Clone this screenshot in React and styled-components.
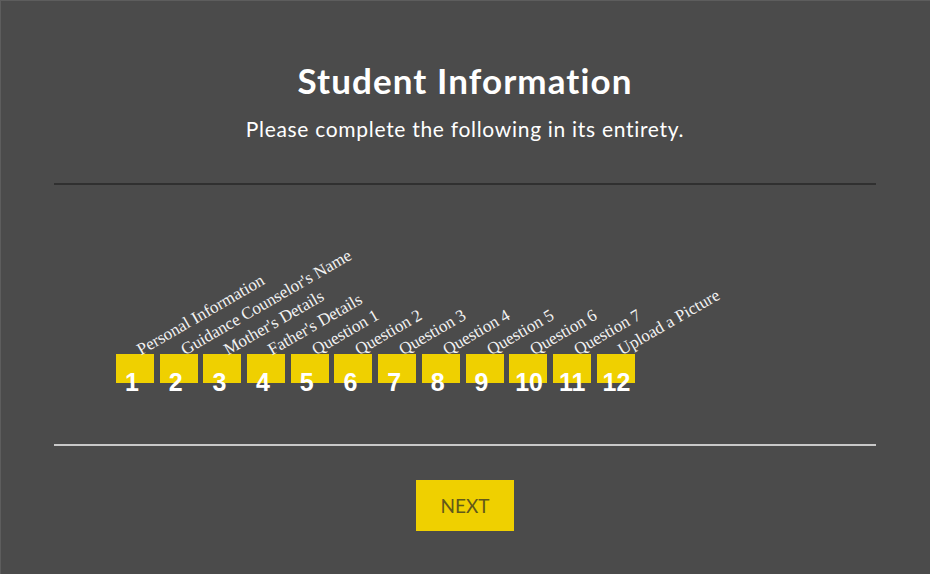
import styled, { createGlobalStyle } from 'styled-components';

const GlobalStyle = createGlobalStyle`
  html, body {
    margin: 0;
    padding: 0;
    background: #4b4b4b;
  }
  body {
    font-family: Lato, "Open Sans", sans-serif;
  }
`;

const steps = [
  'Personal Information',
  "Guidance Counselor's Name",
  "Mother's Details",
  "Father's Details",
  'Question 1',
  'Question 2',
  'Question 3',
  'Question 4',
  'Question 5',
  'Question 6',
  'Question 7',
  'Upload a Picture',
];

const Page = styled.div`
  box-sizing: border-box;
  min-height: 574px;
  padding: 0 54px;
  background: #4b4b4b;
  box-shadow: inset 1px 1px 0 #5d5d5d;
  color: #fff;
`;

const Header = styled.header`
  text-align: center;
  padding-top: 60px;
`;

const Title = styled.h1`
  margin: 0;
  font-size: 35px;
  line-height: 40px;
  font-weight: 700;
  letter-spacing: 1.1px;
`;

const Subtitle = styled.p`
  margin: 16px 0 0;
  font-size: 21px;
  line-height: 26px;
  font-weight: 400;
  letter-spacing: 0.7px;
`;

const Rule = styled.div`
  height: 2px;
  margin-top: ${(p) => p.$top || 0}px;
  background: ${(p) => (p.$light ? '#c9c9c9' : '#303030')};
`;

const StepsArea = styled.div`
  height: 259px;
  display: flex;
  align-items: flex-end;
  padding: 0 0 61px 62px;
  box-sizing: border-box;
`;

const StepList = styled.ol`
  list-style: none;
  margin: 0;
  padding: 0;
  display: flex;
  gap: 5.7px;
`;

const Step = styled.li`
  position: relative;
  width: 38px;
  height: 29px;
  background: #efd000;
  display: flex;
  align-items: flex-end;
  padding-left: ${(p) => (p.$wide ? 6 : 9)}px;
  box-sizing: border-box;
`;

const StepNumber = styled.span`
  font-family: "Liberation Sans", Arial, sans-serif;
  font-weight: 700;
  font-size: 25px;
  line-height: 25px;
  color: #fff;
  margin-bottom: -12px;
`;

const StepLabel = styled.span`
  position: absolute;
  left: 27px;
  bottom: calc(100% - 5px);
  transform-origin: 0 100%;
  transform: rotate(-30deg);
  white-space: nowrap;
  font-family: "Liberation Serif", "Times New Roman", serif;
  font-size: 17px;
  line-height: 19px;
  color: #f2f2f2;
`;

const Footer = styled.div`
  display: flex;
  justify-content: center;
  padding-top: 34px;
`;

const NextButton = styled.button`
  width: 98px;
  height: 51px;
  border: none;
  background: #efd000;
  color: #62591a;
  font-family: Lato, "Open Sans", sans-serif;
  font-size: 19px;
  cursor: pointer;
`;

export default function App() {
  return (
    <>
      <GlobalStyle />
      <Page>
        <Header>
          <Title>Student Information</Title>
          <Subtitle>Please complete the following in its entirety.</Subtitle>
        </Header>
        <Rule $top={41} />
        <StepsArea>
          <StepList>
            {steps.map((label, i) => (
              <Step key={label} $wide={i >= 9}>
                <StepLabel>{label}</StepLabel>
                <StepNumber>{i + 1}</StepNumber>
              </Step>
            ))}
          </StepList>
        </StepsArea>
        <Rule $light />
        <Footer>
          <NextButton>NEXT</NextButton>
        </Footer>
      </Page>
    </>
  );
}
